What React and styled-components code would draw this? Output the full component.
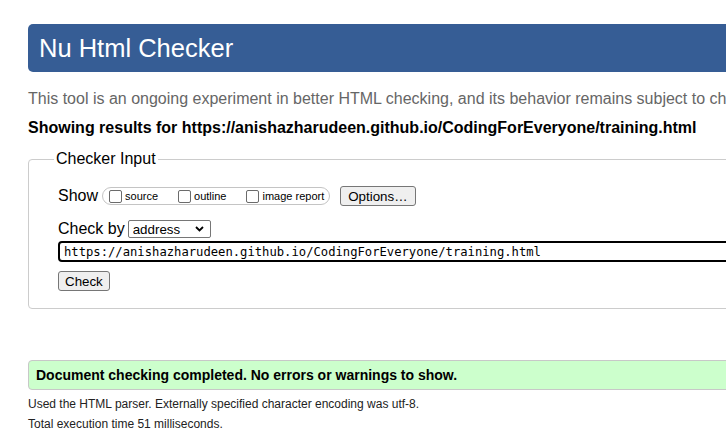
import React from "react";
import styled, { createGlobalStyle } from "styled-components";

const GlobalStyle = createGlobalStyle`
  html, body {
    margin: 0;
    padding: 0;
    overflow: hidden;
    background: #fff;
  }
  body {
    font-family: "Liberation Sans", Arial, sans-serif;
    color: #000;
  }
`;

const Page = styled.div`
  width: 1100px;
  padding: 24px 0 0 28px;
`;

const Header = styled.h1`
  margin: 0;
  height: 48px;
  line-height: 48px;
  padding: 0 11px;
  background: #365d95;
  color: #fff;
  font-size: 25.5px;
  font-weight: normal;
  border-radius: 5px;
`;

const Intro = styled.p`
  margin: 18px 0 0;
  font-size: 16px;
  line-height: 18px;
  color: #666;
  white-space: nowrap;
`;

const Results = styled.p`
  margin: 11px 0 0;
  font-size: 16px;
  line-height: 18px;
  font-weight: bold;
  white-space: nowrap;
`;

const Fieldset = styled.fieldset`
  margin: 13px 0 0;
  padding: 0 29px 17px 29px;
  border: 1px solid #ccc;
  border-radius: 4px;
  min-width: 0;
`;

const Legend = styled.legend`
  font-size: 16px;
  line-height: 18px;
  padding: 0 2px;
  margin-left: -4px;
`;

const Row = styled.div`
  display: flex;
  align-items: center;
  height: ${(p) => p.$h}px;
  margin-top: ${(p) => p.$mt}px;
`;

const RowLabel = styled.span`
  font-size: 16px;
  margin-right: ${(p) => p.$mr}px;
  white-space: nowrap;
`;

const Pill = styled.div`
  display: inline-flex;
  align-items: center;
  box-sizing: border-box;
  height: 18px;
  border: 1px solid #c4c4c4;
  border-radius: 9px;
  padding: 0 5px 0 2px;
  font-size: 11px;
`;

const CheckItem = styled.label`
  display: inline-flex;
  align-items: center;
  white-space: nowrap;
  margin-right: ${(p) => (p.$last ? 0 : 16)}px;
`;

const Checkbox = styled.input`
  appearance: none;
  box-sizing: border-box;
  width: 13px;
  height: 13px;
  margin: 0 3px 0 4px;
  border: 1px solid #6b6b6b;
  border-radius: 2px;
  background: #fff;
`;

const Button = styled.button`
  box-sizing: border-box;
  height: 20px;
  padding: 0 ${(p) => p.$pad}px;
  margin-left: ${(p) => p.$ml || 0}px;
  font-family: "Liberation Sans", Arial, sans-serif;
  font-size: 13.33px;
  color: #000;
  background: #efefef;
  border: 1px solid #767676;
  border-radius: 3px;
`;

const SelectWrap = styled.div`
  position: relative;
  display: inline-block;
  margin-left: 3px;
`;

const Select = styled.select`
  appearance: none;
  box-sizing: border-box;
  width: 83px;
  height: 18px;
  padding: 0 0 0 4px;
  border: 1px solid #767676;
  border-radius: 2px;
  background: #fff;
  color: #000;
  font-family: "Liberation Sans", Arial, sans-serif;
  font-size: 13.33px;
  display: block;
`;

const Chevron = styled.svg`
  position: absolute;
  right: 7px;
  top: 6px;
  pointer-events: none;
`;

const UrlInput = styled.input`
  display: block;
  box-sizing: border-box;
  width: 100%;
  height: 21px;
  margin-top: 2px;
  padding: 0 4px;
  border: 2px solid #000;
  border-radius: 4px;
  font-family: "DejaVu Sans Mono", "Liberation Mono", monospace;
  font-size: 12.2px;
  color: #000;
  outline: none;
`;

const ButtonRow = styled.div`
  margin-top: 9px;
  display: flex;
`;

const Success = styled.div`
  box-sizing: border-box;
  margin-top: 51px;
  height: 30px;
  line-height: 28px;
  padding: 0 7px;
  background: #ccffcc;
  border: 1px solid #c8c8c8;
  border-radius: 4px;
  font-size: 14px;
  font-weight: bold;
  white-space: nowrap;
`;

const Meta = styled.p`
  margin: ${(p) => p.$mt}px 0 0;
  font-size: 12px;
  line-height: 20px;
  color: #222;
  white-space: nowrap;
`;

export default function App() {
  return (
    <>
      <GlobalStyle />
      <Page>
        <Header>Nu Html Checker</Header>
        <Intro>
          This tool is an ongoing experiment in better HTML checking, and its
          behavior remains subject to change
        </Intro>
        <Results>
          Showing results for
          https://anishazharudeen.github.io/CodingForEveryone/training.html
        </Results>
        <Fieldset>
          <Legend>Checker Input</Legend>
          <Row $h={22} $mt={17}>
            <RowLabel $mr={4}>Show</RowLabel>
            <Pill>
              <CheckItem>
                <Checkbox type="checkbox" />
                source
              </CheckItem>
              <CheckItem>
                <Checkbox type="checkbox" />
                outline
              </CheckItem>
              <CheckItem $last>
                <Checkbox type="checkbox" />
                image report
              </CheckItem>
            </Pill>
            <Button type="button" $pad={7} $ml={10}>
              Options…
            </Button>
          </Row>
          <Row $h={20} $mt={12}>
            <RowLabel $mr={0}>Check by</RowLabel>
            <SelectWrap>
              <Select defaultValue="address">
                <option value="address">address</option>
                <option value="upload">file upload</option>
                <option value="text">text input</option>
              </Select>
              <Chevron width="9" height="6" viewBox="0 0 9 6">
                <polyline
                  points="1,1 4.5,4.5 8,1"
                  fill="none"
                  stroke="#000"
                  strokeWidth="1.8"
                />
              </Chevron>
            </SelectWrap>
          </Row>
          <UrlInput
            type="text"
            defaultValue="https://anishazharudeen.github.io/CodingForEveryone/training.html"
          />
          <ButtonRow>
            <Button type="button" $pad={6}>
              Check
            </Button>
          </ButtonRow>
        </Fieldset>
        <Success>
          Document checking completed. No errors or warnings to show.
        </Success>
        <Meta $mt={4}>
          Used the HTML parser. Externally specified character encoding was
          utf-8.
        </Meta>
        <Meta $mt={0}>Total execution time 51 milliseconds.</Meta>
      </Page>
    </>
  );
}
